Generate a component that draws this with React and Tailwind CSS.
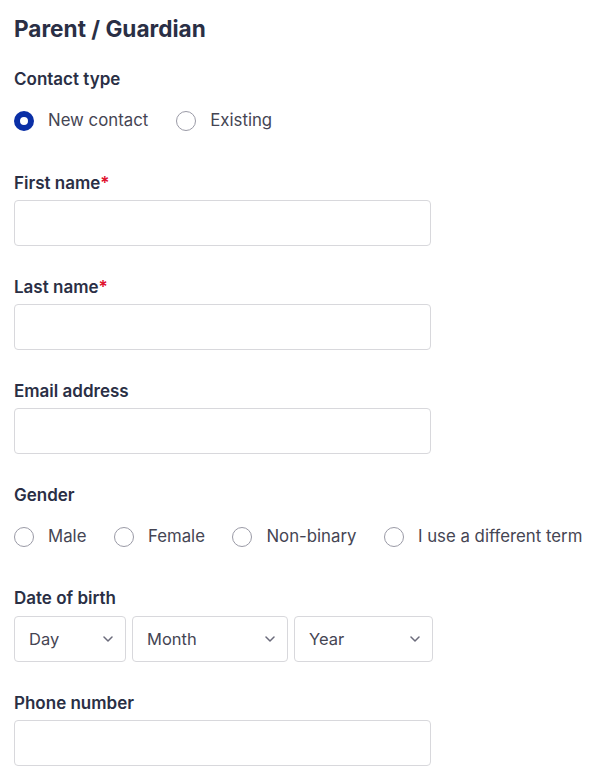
import { useState } from 'react';

const FONT = { fontFamily: 'Inter, "Noto Sans", sans-serif' };

function Radio({ checked, label, onClick }) {
  return (
    <label className="flex items-center cursor-pointer whitespace-nowrap shrink-0" onClick={onClick}>
      <span
        className={
          checked
            ? 'w-5 h-5 rounded-full border-[6px] border-[#0a2fa6] bg-white shrink-0'
            : 'w-5 h-5 rounded-full border border-[#9a9aa6] bg-white shrink-0'
        }
      />
      <span className="ml-[14px] text-[16.8px] text-[#454553]">{label}</span>
    </label>
  );
}

function Label({ children, required }) {
  return (
    <div className="text-[17px] font-semibold text-[#2a2f45] leading-5">
      {children}
      {required && <span className="text-[#e0102c]">*</span>}
    </div>
  );
}

function TextField({ label, required, top = 'mt-[31px]' }) {
  return (
    <div className={top}>
      <Label required={required}>{label}</Label>
      <input
        type="text"
        className="mt-[7px] block w-[417px] h-[46px] rounded border border-[#d8d8dc] bg-white px-3 outline-none"
      />
    </div>
  );
}

function Select({ label, width }) {
  return (
    <div
      className="h-[46px] rounded border border-[#d8d8dc] bg-white flex items-center justify-between pl-[14px] pr-[12px]"
      style={{ width }}
    >
      <span className="text-[16.5px] text-[#454553]">{label}</span>
      <svg width="10" height="6" viewBox="0 0 10 6" fill="none">
        <path d="M1 1l4 4 4-4" stroke="#6b6b7b" strokeWidth="1.5" strokeLinecap="round" strokeLinejoin="round" />
      </svg>
    </div>
  );
}

export default function App() {
  const [contact, setContact] = useState('new');
  const [gender, setGender] = useState(null);

  return (
    <div className="bg-white min-h-[780px] px-[14px] pt-[15px]" style={FONT}>
      <h2 className="text-[22.6px] font-bold text-[#2a2f45] leading-7">Parent / Guardian</h2>

      <div className="mt-[26px]">
        <Label>Contact type</Label>
        <div className="flex items-center gap-[28px] mt-[19px]">
          <Radio checked={contact === 'new'} label="New contact" onClick={() => setContact('new')} />
          <Radio checked={contact === 'existing'} label="Existing" onClick={() => setContact('existing')} />
        </div>
      </div>

      <TextField label="First name" required top="mt-[40px]" />
      <TextField label="Last name" required />
      <TextField label="Email address" />

      <div className="mt-[31px]">
        <Label>Gender</Label>
        <div className="flex items-center gap-[27.5px] mt-[19px]">
          {['Male', 'Female', 'Non-binary', 'I use a different term'].map(g => (
            <Radio key={g} checked={gender === g} label={g} onClick={() => setGender(g)} />
          ))}
        </div>
      </div>

      <div className="mt-[39px]">
        <Label>Date of birth</Label>
        <div className="flex gap-[6px] mt-[8px]">
          <Select label="Day" width={112} />
          <Select label="Month" width={156} />
          <Select label="Year" width={139} />
        </div>
      </div>

      <TextField label="Phone number" />
    </div>
  );
}
